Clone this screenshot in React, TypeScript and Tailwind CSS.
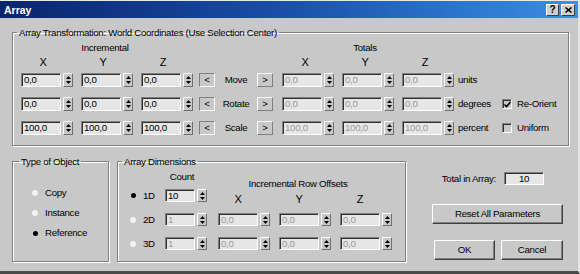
import React from 'react'

const ui = "font-['Liberation_Sans',Arial,sans-serif] text-[9.7px] leading-[12px] tracking-[-0.3px] text-black"

function Spin({ short }: { short?: boolean }) {
  return (
    <div
      className={`${short ? 'h-[13px]' : 'h-[14px]'} w-[10px] shrink-0 flex flex-col items-center justify-center gap-[2px] bg-[#c8c8c8] border border-t-white border-l-white border-b-[#707070] border-r-[#707070]`}
    >
      <svg width="5" height="3" viewBox="0 0 5 3">
        <path d="M2.5 0 L5 3 L0 3 Z" fill="#000" />
      </svg>
      <svg width="5" height="3" viewBox="0 0 5 3">
        <path d="M0 0 L5 0 L2.5 3 Z" fill="#000" />
      </svg>
    </div>
  )
}

function Field({
  value,
  off,
  short,
  w = 'w-[40px]',
  center,
}: {
  value: string
  off?: boolean
  short?: boolean
  w?: string
  center?: boolean
}) {
  return (
    <div
      className={`${w} ${short ? 'h-[13px]' : 'h-[14px]'} shrink-0 flex items-center bg-[#e6e6e6] border border-t-[#808080] border-l-[#808080] border-b-white border-r-white shadow-[inset_1px_1px_0_#303030] ${center ? 'justify-center' : 'pl-[2px]'} ${off ? 'text-[#9a9a9a]' : 'text-black'}`}
    >
      {value}
    </div>
  )
}

function SpinField({ value, off, short, w }: { value: string; off?: boolean; short?: boolean; w?: string }) {
  return (
    <div className="flex items-center gap-[2px]">
      <Field value={value} off={off} short={short} w={w} />
      <Spin short={short} />
    </div>
  )
}

function Arrow({ dir }: { dir: '<' | '>' }) {
  const sunk = dir === '<'
  return (
    <div
      className={`w-[16px] h-[14px] shrink-0 flex items-center justify-center border ${
        sunk
          ? 'border-t-[#808080] border-l-[#808080] border-b-white border-r-white'
          : 'border-t-white border-l-white border-b-[#808080] border-r-[#808080]'
      }`}
    >
      {dir}
    </div>
  )
}

function Radio({ on }: { on?: boolean }) {
  return on ? (
    <div className="w-[5px] h-[5px] mx-[0.5px] rounded-full bg-black shrink-0" />
  ) : (
    <div className="w-[6px] h-[6px] rounded-full bg-[#f2f2f2] shrink-0" />
  )
}

function Check({ on }: { on?: boolean }) {
  return (
    <div className="w-[10px] h-[10px] shrink-0 border border-t-[#808080] border-l-[#808080] border-b-white border-r-white shadow-[inset_1px_1px_0_#303030] flex items-center justify-center">
      {on && (
        <svg width="7" height="7" viewBox="0 0 7 7">
          <path d="M0.5 3.5 L2.5 5.5 L6.5 1" stroke="#000" strokeWidth="1.6" fill="none" />
        </svg>
      )}
    </div>
  )
}

function Button({ children, className }: { children: React.ReactNode; className: string }) {
  return (
    <div
      className={`h-[20px] flex items-center justify-center whitespace-nowrap bg-[#c8c8c8] border border-t-white border-l-white border-b-[#404040] border-r-[#404040] shadow-[inset_-1px_-1px_0_#808080] ${className}`}
    >
      {children}
    </div>
  )
}

const groupBox = 'border border-[#808080] shadow-[inset_1px_1px_0_#fff,1px_1px_0_#fff] p-0 m-0 min-w-0'

const rows = [
  { label: 'Move', inc: '0,0', tot: '0,0', unit: 'units' },
  { label: 'Rotate', inc: '0,0', tot: '0,0', unit: 'degrees', check: 'Re-Orient', on: true },
  { label: 'Scale', inc: '100,0', tot: '100,0', unit: 'percent', check: 'Uniform', on: false },
]

export default function App() {
  return (
    <div className={`w-[580px] h-[274px] overflow-hidden whitespace-nowrap bg-[#c8c8c8] border-t border-t-[#e8e8e8] border-b-[3px] border-b-[#4a4a4a] border-r-2 border-r-[#e4e4e4] ${ui}`}>
      {/* title bar */}
      <div className="h-[17px] flex items-center bg-gradient-to-r from-[#0a246a] via-[#1a50aa] to-[#3c8ee4] pl-[4px] pr-[3px]">
        <span className="text-white font-bold text-[10.5px] tracking-normal">Array</span>
        <div className="ml-auto flex gap-[2px]">
          <div className="w-[13px] h-[12px] flex items-center justify-center bg-[#d0d0d0] border border-t-white border-l-white border-b-[#404040] border-r-[#404040] font-bold text-[10px]">
            ?
          </div>
          <div className="w-[14px] h-[12px] flex items-center justify-center bg-[#d0d0d0] border border-t-white border-l-white border-b-[#404040] border-r-[#404040]">
            <svg width="7" height="6" viewBox="0 0 7 6">
              <path d="M0.5 0.5 L6.5 5.5 M6.5 0.5 L0.5 5.5" stroke="#000" strokeWidth="1.5" />
            </svg>
          </div>
        </div>
      </div>

      {/* transformation group */}
      <fieldset className={`${groupBox} ml-[12px] mt-[8px] w-[557px]`}>
        <legend className="ml-[4px] px-[2px] leading-[13px]">
          Array Transformation: World Coordinates (Use Selection Center)
        </legend>
        <div className="pl-[8px] pb-[10px]">
          <div className="flex mt-[3px]">
            <div className="w-[168px] text-center">Incremental</div>
            <div className="ml-[94px] w-[164px] text-center">Totals</div>
          </div>
          <div className="flex mt-[2px] text-[11px]">
            <div className="flex gap-[16px]">
              <div className="w-[44px] text-center">X</div>
              <div className="w-[44px] text-center">Y</div>
              <div className="w-[44px] text-center">Z</div>
            </div>
            <div className="flex gap-[16px] ml-[98px]">
              <div className="w-[44px] text-center">X</div>
              <div className="w-[44px] text-center">Y</div>
              <div className="w-[44px] text-center">Z</div>
            </div>
          </div>
          <div className="flex flex-col gap-[10px] mt-[5px]">
            {rows.map((r) => (
              <div key={r.label} className="flex items-center h-[14px]">
                <div className="flex gap-[8px]">
                  <SpinField value={r.inc} />
                  <SpinField value={r.inc} />
                  <SpinField value={r.inc} />
                </div>
                <div className="ml-[6px]">
                  <Arrow dir="<" />
                </div>
                <div className="w-[42px] text-center">{r.label}</div>
                <Arrow dir=">" />
                <div className="flex gap-[8px] ml-[9px]">
                  <SpinField value={r.tot} off />
                  <SpinField value={r.tot} off />
                  <SpinField value={r.tot} off />
                </div>
                <div className="ml-[4px] w-[44px]">{r.unit}</div>
                {r.check && (
                  <div className="flex items-center gap-[5px]">
                    <Check on={r.on} />
                    <span>{r.check}</span>
                  </div>
                )}
              </div>
            ))}
          </div>
        </div>
      </fieldset>

      <div className="flex items-stretch mt-[9px]">
        {/* type of object */}
        <fieldset className={`${groupBox} ml-[12px] w-[97px]`}>
          <legend className="ml-[6px] px-[2px] leading-[13px]">Type of Object</legend>
          <div className="flex flex-col gap-[8px] mt-[19px] pl-[19px]">
            {[
              ['Copy', false],
              ['Instance', false],
              ['Reference', true],
            ].map(([t, on]) => (
              <div key={t as string} className="flex items-center h-[12px] gap-[7px]">
                <Radio on={on as boolean} />
                <span>{t}</span>
              </div>
            ))}
          </div>
        </fieldset>

        {/* array dimensions */}
        <fieldset className={`${groupBox} ml-[8px] w-[289px]`}>
          <legend className="ml-[4px] px-[2px] leading-[13px]">Array Dimensions</legend>
          <div className="flex mt-[3px] pb-[11px]">
            <div className="pl-[12px] flex flex-col">
              <div className="ml-[35px] w-[34px] text-center h-[12px]">Count</div>
              <div className="flex flex-col gap-[11px] mt-[6px]">
                {[
                  ['1D', '10', true],
                  ['2D', '1', false],
                  ['3D', '1', false],
                ].map(([d, v, on]) => (
                  <div key={d as string} className="flex items-center h-[13px]">
                    <Radio on={on as boolean} />
                    <span className="ml-[7px] w-[22px]">{d}</span>
                    <SpinField value={v as string} off={!on} short w="w-[30px]" />
                  </div>
                ))}
              </div>
            </div>
            <div className="ml-[11px] pt-[7px] flex flex-col">
              <div className="w-[160px] text-center h-[12px]">Incremental Row Offsets</div>
              <div className="flex gap-[21px] mt-[3px] h-[12px] text-[11px]">
                <div className="w-[40px] text-center">X</div>
                <div className="w-[40px] text-center">Y</div>
                <div className="w-[40px] text-center">Z</div>
              </div>
              <div className="flex flex-col gap-[11px] mt-[8px]">
                {[0, 1].map((i) => (
                  <div key={i} className="flex gap-[9px]">
                    <SpinField value="0,0" off short />
                    <SpinField value="0,0" off short />
                    <SpinField value="0,0" off short />
                  </div>
                ))}
              </div>
            </div>
          </div>
        </fieldset>

        {/* right column */}
        <div className="ml-[26px] w-[131px] flex flex-col">
          <div className="flex items-center justify-end gap-[8px] pr-[19px] mt-[17px]">
            <span>Total in Array:</span>
            <Field value="10" short center />
          </div>
          <Button className="mt-[19px] w-[131px]">Reset All Parameters</Button>
          <div className="flex mt-[16px]">
            <Button className="ml-[2px] w-[61px]">OK</Button>
            <Button className="ml-auto w-[62px]">Cancel</Button>
          </div>
        </div>
      </div>
    </div>
  )
}
